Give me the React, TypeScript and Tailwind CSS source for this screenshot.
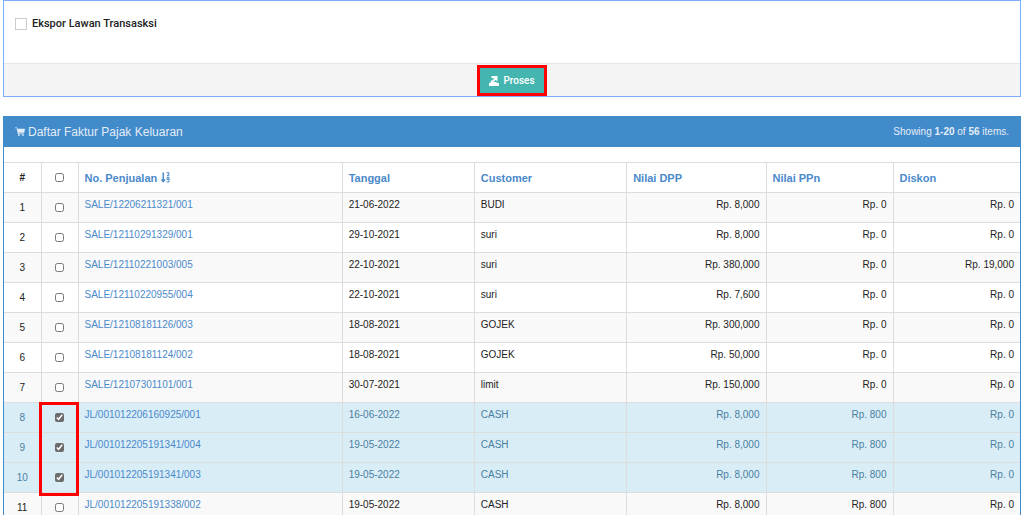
import React, { useState } from 'react';

interface Invoice {
  id: string;
  date: string;
  customer: string;
  dpp: string;
  ppn: string;
  discount: string;
}

const invoices: Invoice[] = [
  { id: 'SALE/12206211321/001', date: '21-06-2022', customer: 'BUDI', dpp: '8,000', ppn: '0', discount: '0' },
  { id: 'SALE/12110291329/001', date: '29-10-2021', customer: 'suri', dpp: '8,000', ppn: '0', discount: '0' },
  { id: 'SALE/12110221003/005', date: '22-10-2021', customer: 'suri', dpp: '380,000', ppn: '0', discount: '19,000' },
  { id: 'SALE/12110220955/004', date: '22-10-2021', customer: 'suri', dpp: '7,600', ppn: '0', discount: '0' },
  { id: 'SALE/12108181126/003', date: '18-08-2021', customer: 'GOJEK', dpp: '300,000', ppn: '0', discount: '0' },
  { id: 'SALE/12108181124/002', date: '18-08-2021', customer: 'GOJEK', dpp: '50,000', ppn: '0', discount: '0' },
  { id: 'SALE/12107301101/001', date: '30-07-2021', customer: 'limit', dpp: '150,000', ppn: '0', discount: '0' },
  { id: 'JL/001012206160925/001', date: '16-06-2022', customer: 'CASH', dpp: '8,000', ppn: '800', discount: '0' },
  { id: 'JL/001012205191341/004', date: '19-05-2022', customer: 'CASH', dpp: '8,000', ppn: '800', discount: '0' },
  { id: 'JL/001012205191341/003', date: '19-05-2022', customer: 'CASH', dpp: '8,000', ppn: '800', discount: '0' },
  { id: 'JL/001012205191338/002', date: '19-05-2022', customer: 'CASH', dpp: '8,000', ppn: '800', discount: '0' },
];

const CartIcon = () => (
  <svg className="h-[9px] w-[10px]" viewBox="0 0 22 20" fill="currentColor" aria-hidden="true">
    <path d="M0 1h4.5l1 3H22l-1.5 9H8l.4 1.6H20V16H6.5L3.5 3H0z" />
    <circle cx="8.5" cy="18" r="2" />
    <circle cx="17.5" cy="18" r="2" />
  </svg>
);

const ExportIcon = () => (
  <svg className="h-[10px] w-[10px]" viewBox="0 0 20 20" fill="currentColor" aria-hidden="true">
    <path d="M5 0h12v11l-3.500-3.500L9 12H4l7-7.500H5z" />
    <path d="M3 11l3-3v4h8l3 2H3z" />
    <path d="M0 14h20v6H0z" />
  </svg>
);

const SortIcon = () => (
  <svg className="h-[11px] w-[9px]" viewBox="0 0 18 22" fill="none" stroke="currentColor" strokeWidth="2" aria-hidden="true">
    <path strokeWidth="3" d="M4.500 1v18M1 15l3.500 4L8 15" />
    <path d="M11 1.500h5V4l-4 3.500h5" />
    <path d="M12 11h4v4h-4zM16 15v5h-5" />
  </svg>
);

const headings = ['Tanggal', 'Customer', 'Nilai DPP', 'Nilai PPn', 'Diskon'];

const App: React.FC = () => {
  const [selected, setSelected] = useState<number[]>([7, 8, 9]);

  const toggleRow = (index: number) => {
    setSelected(prev => (prev.includes(index) ? prev.filter(i => i !== index) : [...prev, index]));
  };

  const toggleAll = () => {
    setSelected(prev => (prev.length === invoices.length ? [] : invoices.map((_, i) => i)));
  };

  return (
    <div className="flex h-screen flex-col bg-white px-[3px] pb-1 font-['Liberation_Sans',Arial,sans-serif] text-[10px] leading-4 text-[#222]">
      {/* Export options */}
      <section className="shrink-0 border border-[#7fadf7]">
        <div className="flex h-[62px] items-start px-[11px] pt-[15px]">
          <label className="flex items-center gap-[5px] font-['Roboto',sans-serif] text-[11px] font-medium text-[#222]">
            <input type="checkbox" className="size-3 appearance-none border border-[#ccc] bg-white checked:bg-[#666]" />
            Ekspor Lawan Transasksi
          </label>
        </div>
        <div className="flex justify-center border-t border-[#e5e5e5] bg-[#f4f4f4] pt-px">
          <button
            type="button"
            className="flex h-[31px] items-center gap-1 border-3 border-[#f00] bg-[#45b6af] px-[9px] font-['Roboto',sans-serif] text-[10px] font-medium text-white"
          >
            <ExportIcon />
            Proses
          </button>
        </div>
      </section>

      {/* Invoice list */}
      <section className="mt-[19px] flex min-h-0 flex-1 flex-col overflow-hidden border-x border-[#428bca]">
        <header className="flex h-[31px] shrink-0 items-center justify-between bg-[#428bca] px-[11px] text-[#e3edf7]">
          <h2 className="flex items-center gap-[3px] text-[12px]">
            <CartIcon />
            Daftar Faktur Pajak Keluaran
          </h2>
          <p>
            Showing <b>1-20</b> of <b>56</b> items.
          </p>
        </header>

        <table className="mt-[15px] w-full table-fixed border-collapse border-t border-[#ddd]">
          <colgroup>
            <col className="w-[37px]" />
            <col className="w-[37px]" />
            <col className="w-[26%]" />
            <col className="w-[13%]" />
            <col className="w-[15%]" />
            <col />
            <col className="w-1/8" />
            <col className="w-1/8" />
          </colgroup>
          <thead>
            <tr className="h-[30px] border-b border-[#ddd] text-left text-[11px] text-[#4a89ca]">
              <th className="text-center text-[10px] text-[#222]">#</th>
              <th className="border-x border-[#ddd] text-center">
                <input
                  type="checkbox"
                  aria-label="Select all"
                  className="mx-auto block size-[9px] accent-[#6b6b6b]"
                  checked={selected.length === invoices.length}
                  onChange={toggleAll}
                />
              </th>
              <th className="border-r border-[#ddd] px-[6px]">
                <a href="#no" className="flex items-center gap-1">
                  No. Penjualan
                  <SortIcon />
                </a>
              </th>
              {headings.map(heading => (
                <th key={heading} className="border-r border-[#ddd] px-[6px] last:border-r-0">
                  <a href="#sort">{heading}</a>
                </th>
              ))}
            </tr>
          </thead>
          <tbody>
            {invoices.map((row, i) => {
              const checked = selected.includes(i);
              return (
                <tr
                  key={row.id}
                  className={
                    checked
                      ? 'h-[30px] border-b border-[#ddd] bg-[#d9edf7] align-top text-[#4a7f9f]'
                      : 'h-[30px] border-b border-[#ddd] align-top odd:bg-[#f9f9f9]'
                  }
                >
                  <td className="text-center align-middle">{i + 1}</td>
                  <td className="relative border-x border-[#ddd] align-middle">
                    <input
                      type="checkbox"
                      aria-label={row.id}
                      className="mx-auto block size-[9px] accent-[#6b6b6b]"
                      checked={checked}
                      onChange={() => toggleRow(i)}
                    />
                    {/* Frame round the three selected rows */}
                    {i === 7 && (
                      <div className="pointer-events-none absolute -top-px -right-px -left-[3px] z-10 h-[94px] border-3 border-[#f00]" />
                    )}
                  </td>
                  <td className="border-r border-[#ddd] px-[6px] pt-1">
                    <a href="#invoice" className="text-[#4a89ca]">{row.id}</a>
                  </td>
                  <td className="border-r border-[#ddd] px-[6px] pt-1">{row.date}</td>
                  <td className="border-r border-[#ddd] px-[6px] pt-1">{row.customer}</td>
                  <td className="border-r border-[#ddd] px-[6px] pt-1 text-right">Rp. {row.dpp}</td>
                  <td className="border-r border-[#ddd] px-[6px] pt-1 text-right">Rp. {row.ppn}</td>
                  <td className="px-[6px] pt-1 text-right">Rp. {row.discount}</td>
                </tr>
              );
            })}
          </tbody>
        </table>
      </section>
    </div>
  );
};

export default App;
